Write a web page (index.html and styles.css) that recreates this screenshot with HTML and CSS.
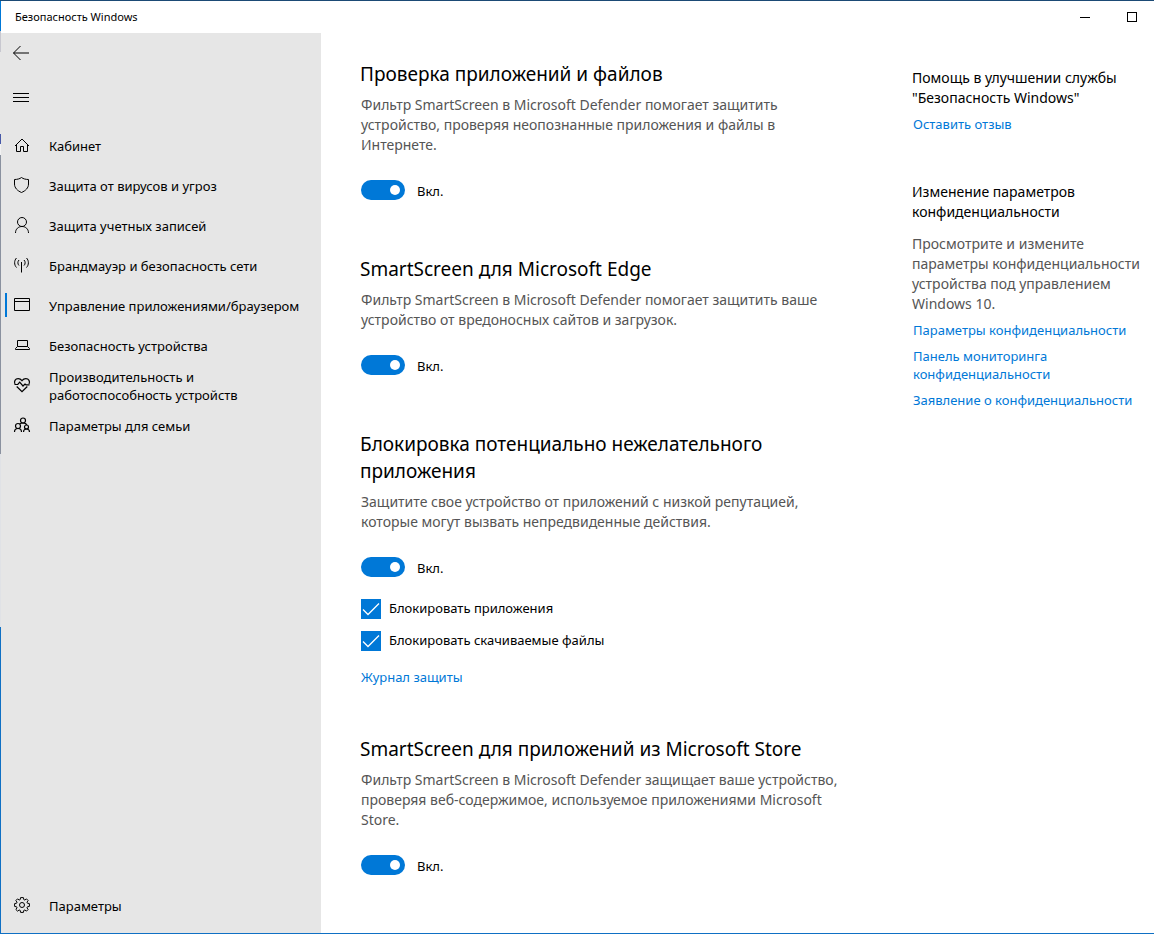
FILE: index.html
```html
<!DOCTYPE html>
<html lang="ru">
<head>
  <meta charset="UTF-8" />
  <meta name="viewport" content="width=device-width, initial-scale=1" />
  <title>Безопасность Windows</title>
  <link rel="stylesheet" href="styles.css">
</head>
<body>
  <div class="window">
    <header class="titlebar">
      <span class="titlebar-text">Безопасность Windows</span>
      <button class="caption-btn" type="button" aria-label="Свернуть">
        <svg width="12" height="12"><path d="M1 6.500h10" /></svg>
      </button>
      <button class="caption-btn" type="button" aria-label="Развернуть">
        <svg width="12" height="12"><rect x="2.500" y="1.500" width="9" height="9" /></svg>
      </button>
    </header>

    <div class="layout">
      <nav class="sidebar">
        <button class="nav-btn" type="button" aria-label="Назад">
          <svg width="16" height="16"><path d="M.5 8H16M7.500 1L.5 8l7 7" /></svg>
        </button>
        <button class="nav-btn" type="button" aria-label="Меню">
          <svg width="16" height="16"><path d="M0 4.500h16M0 8.500h16M0 12.500h16" /></svg>
        </button>

        <ul class="nav-list">
          <li><a class="nav-item" href="#">
            <svg width="16" height="16"><path d="M1 8L8 1l7 7M2.500 7v6.500h4v-5h3v5h4V7" /></svg>
            <span>Кабинет</span></a></li>
          <li><a class="nav-item" href="#">
            <svg width="16" height="16"><path d="M7.500-.5C5.800.9 3 1.500.5 1.500V6c0 4 3 6.800 7 8.500 4-1.700 7-4.500 7-8.500V1.500C12 1.500 9.200.9 7.500-.5z" /></svg>
            <span>Защита от вирусов и угроз</span></a></li>
          <li><a class="nav-item" href="#">
            <svg width="16" height="16"><circle cx="8" cy="4" r="4.500" /><path d="M1.500 15c0-4 2.800-6.500 6.500-6.500s6.500 2.500 6.500 6.500" /></svg>
            <span>Защита учетных записей</span></a></li>
          <li><a class="nav-item" href="#">
            <svg width="16" height="16"><path d="M7.500 4v10.500M2.500 0C0 2.500 0 7 2.500 9.500M12.500 0c2.500 2.500 2.500 7 0 9.500M5 2c-1.500 1.500-1.500 4 0 5.500M10 2c1.500 1.500 1.500 4 0 5.500" /></svg>
            <span>Брандмауэр и безопасность сети</span></a></li>
          <li><a class="nav-item active" href="#" aria-current="page">
            <svg width="16" height="16"><path d="M.5.500h15v12H.5zM.5 3.500h15" /></svg>
            <span>Управление приложениями/браузером</span></a></li>
          <li><a class="nav-item" href="#">
            <svg width="16" height="16"><path d="M3.500 8.500v-6h10v6M1.500 11.500v-1l2-2h10l2 2v1z" /></svg>
            <span>Безопасность устройства</span></a></li>
          <li><a class="nav-item" href="#">
            <svg class="bold" width="16" height="16"><path d="M1 6C-.3 3.500 1.200.7 4.200.7 6 .7 7.200 1.700 8 2.700 8.800 1.700 10 .7 11.800.7c3 0 4.500 2.800 3.200 5.300M2.700 8.500L8 13.700l5.300-5.200M.5 6.500h3.300L5.700 4.200 9 8l2-2 1 .8h3.500" /></svg>
            <span>Производительность и<br>работоспособность устройств</span></a></li>
          <li><a class="nav-item" href="#">
            <svg class="bold" width="16" height="16"><circle cx="9" cy="2.500" r="2.500" /><circle cx="4" cy="8" r="2.500" /><circle cx="12.500" cy="9" r="2" /><path d="M.5 14c0-2.300 1.500-3.500 3.500-3.500S7.500 11.700 7.500 14M9.500 14c0-2 1.200-3 3-3s3 1 3 3M5.500 5.800C6.500 5.200 7.500 5 9 5c2 0 3.300.8 3.700 2" /></svg>
            <span>Параметры для семьи</span></a></li>
        </ul>

        <a class="nav-item settings" href="#">
          <svg width="16" height="16"><path d="M6.600-.4h2.800l.4 2 1 .4 1.700-1.100 1.600 1.600L13 4.200l.4 1 2 .4v2.800l-2 .4-.4 1 1.100 1.700-1.600 1.600-1.700-1.100-1 .4-.4 2H6.600l-.4-2-1-.4-1.700 1.100-1.600-1.600L3 9.800l-.4-1-2-.4V5.600l2-.4.4-1-1.100-1.700L3.500.9 5.200 2l1-.4z" /><circle cx="8" cy="7" r="2.500" /></svg>
          <span>Параметры</span></a>
      </nav>

      <main class="content">
        <section class="block">
          <h2>Проверка приложений и файлов</h2>
          <p>Фильтр SmartScreen в Microsoft Defender помогает защитить устройство, проверяя неопознанные приложения и файлы в Интернете.</p>
          <label class="toggle"><input type="checkbox" role="switch" checked><span>Вкл.</span></label>
        </section>

        <section class="block">
          <h2>SmartScreen для Microsoft Edge</h2>
          <p>Фильтр SmartScreen в Microsoft Defender помогает защитить ваше устройство от вредоносных сайтов и загрузок.</p>
          <label class="toggle"><input type="checkbox" role="switch" checked><span>Вкл.</span></label>
        </section>

        <section class="block">
          <h2>Блокировка потенциально нежелательного приложения</h2>
          <p>Защитите свое устройство от приложений с низкой репутацией, которые могут вызвать непредвиденные действия.</p>
          <label class="toggle"><input type="checkbox" role="switch" checked><span>Вкл.</span></label>
          <div class="checks">
            <label class="check">
              <input type="checkbox" checked>
              <svg width="20" height="20"><path d="M2 10.500l5 5L18 4.500" /></svg>
              <span>Блокировать приложения</span>
            </label>
            <label class="check">
              <input type="checkbox" checked>
              <svg width="20" height="20"><path d="M2 10.500l5 5L18 4.500" /></svg>
              <span>Блокировать скачиваемые файлы</span>
            </label>
          </div>
          <a class="link" href="#">Журнал защиты</a>
        </section>

        <section class="block">
          <h2>SmartScreen для приложений из Microsoft Store</h2>
          <p>Фильтр SmartScreen в Microsoft Defender защищает ваше устройство, проверяя веб-содержимое, используемое приложениями Microsoft Store.</p>
          <label class="toggle"><input type="checkbox" role="switch" checked><span>Вкл.</span></label>
        </section>
      </main>

      <aside class="help">
        <section class="help-block">
          <h3>Помощь в улучшении службы "Безопасность Windows"</h3>
          <a class="link" href="#">Оставить отзыв</a>
        </section>
        <section class="help-block">
          <h3>Изменение параметров конфиденциальности</h3>
          <p>Просмотрите и измените параметры конфиденциальности устройства под управлением Windows 10.</p>
          <a class="link" href="#">Параметры конфиденциальности</a>
          <a class="link" href="#">Панель мониторинга<br>конфиденциальности</a>
          <a class="link" href="#">Заявление о конфиденциальности</a>
        </section>
      </aside>
    </div>
  </div>
</body>
</html>
```
FILE: styles.css
```css
* {
  box-sizing: border-box;
}

body {
  margin: 0;
  background: #fff;
  color: #000;
  font-family: "Noto Sans", "Open Sans", sans-serif;
  font-size: 13px;
  line-height: 18px;
}

h2, h3, p, ul {
  margin: 0;
  padding: 0;
  font-weight: 400;
}

ul {
  list-style: none;
}

a {
  color: inherit;
  text-decoration: none;
}

button {
  padding: 0;
  border: 0;
  background: none;
}

svg {
  flex: none;
  fill: none;
  stroke: #000;
  stroke-width: 1;
  overflow: visible;
}

svg.bold {
  stroke-width: 1.2;
}

.window {
  display: flex;
  flex-direction: column;
  min-height: 100vh;
  padding-left: 1px;
  border-top: 1px solid #1b4a75;
  border-bottom: 1px solid #0f70c4;
  background: linear-gradient(#0078d7 0 30px, #c8c8d0 30px 51px, #e6e6e6 51px 133px, #4759a8 133px 143px, #f2f2f2 143px 154px, #8a919f 154px 453px, #e0e2e6 453px 626px, #0f70c4 626px) 0 0 / 1px 100% no-repeat;
}

.titlebar {
  display: flex;
  align-items: center;
  height: 32px;
  background: #fff;
}

.titlebar-text {
  flex: 1;
  padding-left: 14px;
  font-size: 11px;
}

.caption-btn {
  display: flex;
  align-items: center;
  justify-content: center;
  width: 46px;
  height: 32px;
}

.layout {
  flex: 1;
  display: grid;
  grid-template-columns: 320px minmax(0, 1fr) 242px;
}

/* Sidebar */
.sidebar {
  display: flex;
  flex-direction: column;
  padding-bottom: 7px;
  background: #e6e6e6;
}

.nav-btn {
  display: flex;
  align-items: center;
  width: 44px;
  height: 40px;
  padding-left: 12px;
}

.nav-btn + .nav-btn {
  margin-top: 4px;
}

.nav-list {
  margin-top: 9px;
}

.nav-item {
  position: relative;
  display: flex;
  align-items: center;
  gap: 19px;
  height: 40px;
  padding-left: 13px;
  white-space: nowrap;
}

.nav-item.active::before {
  content: "";
  position: absolute;
  left: 4px;
  top: 7px;
  width: 2px;
  height: 24px;
  background: #0078d7;
}

.settings {
  margin-top: auto;
}

/* Main column */
.content {
  max-width: 524px;
  padding: 28px 0 48px 40px;
}

.block + .block {
  margin-top: 56px;
}

.block:last-child {
  margin-top: 50px;
}

.block h2 {
  max-width: 460px;
  margin-left: -1px;
  font-size: 19px;
  line-height: 27px;
}

.block p {
  margin-top: 7px;
  color: #555;
  font-size: 14px;
  line-height: 20px;
}

.toggle {
  display: flex;
  align-items: center;
  gap: 12px;
  width: max-content;
  height: 20px;
  margin-top: 25px;
}

.toggle input {
  display: flex;
  align-items: center;
  justify-content: flex-end;
  appearance: none;
  width: 44px;
  height: 20px;
  margin: 0;
  padding: 0 5px;
  border-radius: 10px;
  background: #0078d7;
}

.toggle input::before {
  content: "";
  width: 10px;
  height: 10px;
  border-radius: 50%;
  background: #fff;
}

.toggle input:not(:checked) {
  justify-content: flex-start;
  background: #999;
}

.toggle span {
  padding-top: 2px;
}

.checks {
  display: grid;
  gap: 12px;
  margin-top: 22px;
}

.check {
  position: relative;
  display: flex;
  align-items: center;
  gap: 8px;
  width: max-content;
  height: 20px;
}

.check input {
  appearance: none;
  width: 20px;
  height: 20px;
  margin: 0;
  background: #0078d7;
}

.check span {
  padding-bottom: 2px;
}

.check svg {
  position: absolute;
  left: 0;
  top: 0;
  stroke: #fff;
  stroke-width: 1.3;
  visibility: hidden;
}

.check input:checked + svg {
  visibility: visible;
}

.link {
  display: block;
  color: #0078d7;
}

.checks + .link {
  margin-top: 17px;
}

/* Right column */
.help {
  padding-top: 35px;
  white-space: nowrap;
}

.help h3,
.help p {
  font-size: 14px;
  line-height: 20px;
  white-space: normal;
}

.help p {
  margin-top: 12px;
  color: #555;
}

.help .link {
  margin-top: 8px;
  margin-left: 1px;
}

.help h3 + .link,
.help p + .link {
  margin-top: 7px;
}

.help-block + .help-block {
  margin-top: 49px;
}
```
